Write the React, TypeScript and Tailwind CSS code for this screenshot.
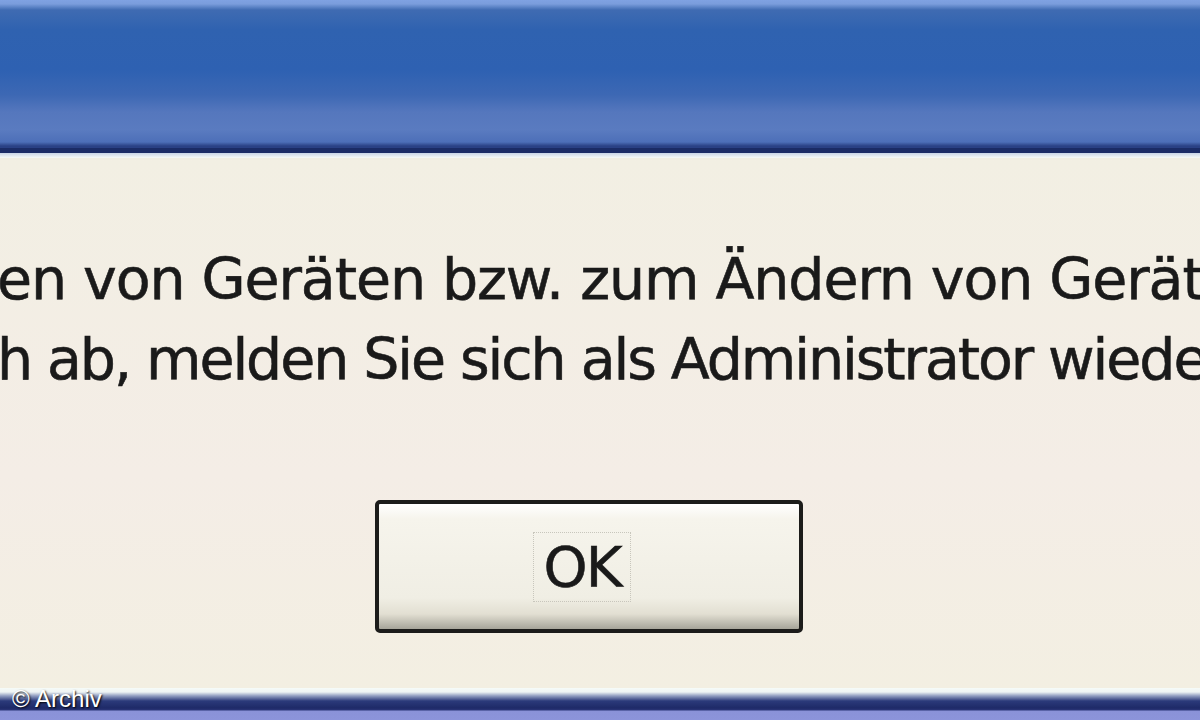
export default function App() {
  const font = { fontFamily: '"DejaVu Sans", Tahoma, sans-serif' };
  return (
    <div className="w-[1200px] h-[720px] overflow-hidden flex flex-col bg-[#f3efe4]">
      {/* Titelleiste */}
      <div className="h-[148px] shrink-0 bg-[linear-gradient(to_bottom,#7fa2e2_0px,#7a9ddc_4px,#3f6bb2_10px,#2f62b0_30px,#2e61b2_70px,#3d68b4_95px,#5577bd_112px,#5a7bc0_130px,#4d6fb8_142px,#2a4185_146px)]" />
      <div className="h-[5px] shrink-0 bg-[#1b2c66]" />
      <div className="h-[5px] shrink-0 bg-[linear-gradient(to_bottom,#c8d4e6,#f8fbf8)]" />

      {/* Inhalt */}
      <div className="flex-1 flex flex-col bg-[linear-gradient(to_bottom,#f2efe3,#f4ede6_60%,#f3efe2)]">
        <div
          className="mt-[81px] ml-[-3px] whitespace-nowrap text-[57px] leading-[80px] text-[#1a1a1a] [-webkit-text-stroke:0.6px_#1a1a1a]"
          style={font}
        >
          <div className="tracking-[-1.1px]">en von Geräten bzw. zum Ändern von Geräteeigenschaften</div>
          <div className="tracking-[-2.1px]">h ab, melden Sie sich als Administrator wieder an</div>
        </div>

        <div className="mt-[101px] ml-[375px] w-[428px] h-[133px] rounded-[5px] border-[4px] border-[#1c1c1a] bg-[linear-gradient(to_bottom,#ffffff_0%,#f6f4ec_12%,#f0eee4_75%,#e2dfd2_88%,#a7a59a_100%)] flex items-center justify-center">
          <div className="mr-[14px] px-[10px] py-[4px] border border-dotted border-[#c8c6bc]">
            <span
              className="text-[56px] leading-[60px] text-[#1a1a1a] tracking-[-2px] [-webkit-text-stroke:0.6px_#1a1a1a]"
              style={font}
            >
              OK
            </span>
          </div>
        </div>
      </div>

      {/* Unterer Rand */}
      <div className="relative h-[32px] shrink-0 bg-[linear-gradient(to_bottom,#f6fbf8_0px,#eef4f4_4px,#8e9bbf_8px,#2b3a7a_13px,#1e2a68_20px,#2a3576_22px,#8a92d8_23px,#8c94da_32px)]">
        <span
          className="absolute left-[12px] top-[-7px] text-[24px] text-white [text-shadow:1px_1px_2px_#000]"
          style={{ fontFamily: '"Liberation Sans", Arial, sans-serif' }}
        >
          © Archiv
        </span>
      </div>
    </div>
  );
}
